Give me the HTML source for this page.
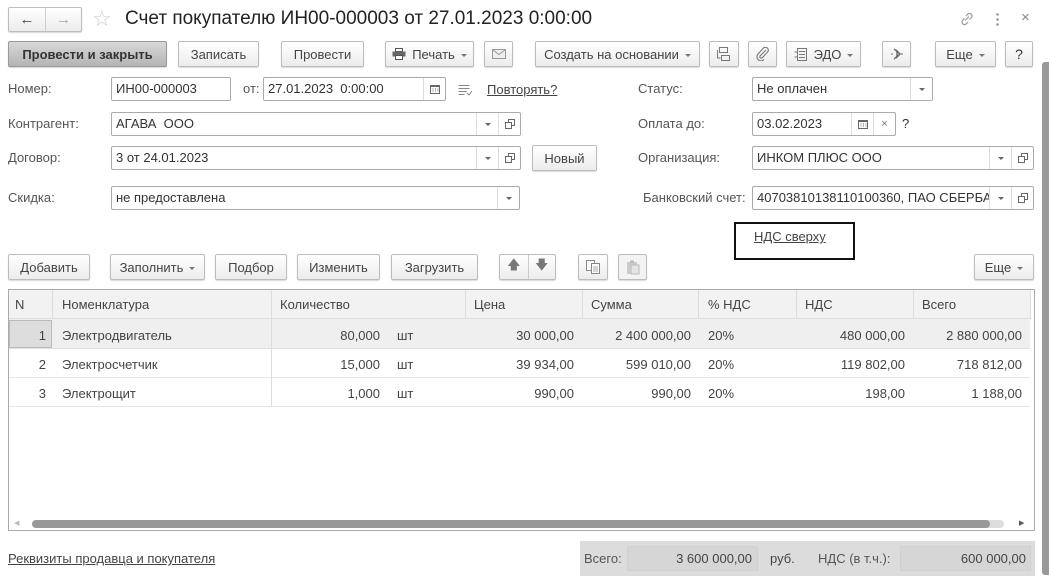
<!DOCTYPE html>
<html><head><meta charset="utf-8">
<style>
*{box-sizing:border-box;margin:0;padding:0}
body{width:1049px;height:582px;background:#fff;font-family:"Liberation Sans",sans-serif;font-size:12.5px;color:#333;position:relative;overflow:hidden}
.a{position:absolute;white-space:nowrap}
.btn{position:absolute;height:26px;border:1px solid #bcbcbc;border-radius:2px;background:linear-gradient(#fff,#ececec);box-shadow:0 1px 1px rgba(0,0,0,.15);display:flex;align-items:center;justify-content:center;color:#444;font-size:13px}
.inp{position:absolute;height:24px;border:1px solid #aaa;border-radius:2px;background:#fff;padding-left:4px;line-height:22px;color:#333;font-size:13px}
.lbl{position:absolute;color:#555;font-size:13px;line-height:24px}
.sb{position:absolute;top:0;bottom:0;border-left:1px solid #ddd;display:flex;align-items:center;justify-content:center;color:#777;font-size:8px}
.dd::after{content:"";border-left:3px solid transparent;border-right:3px solid transparent;border-top:3px solid #666}
.arr::after{content:"";display:inline-block;margin-left:6px;border-left:3px solid transparent;border-right:3px solid transparent;border-top:3px solid #777;vertical-align:middle}
.lnk{position:absolute;color:#444;text-decoration:underline;font-size:13px}
.th,.td{position:absolute;font-size:13px;color:#444}
.vl{position:absolute;width:1px;background:#ddd}
</style></head><body>

<!-- title bar -->
<div class="btn" style="left:8px;top:7px;width:74px;height:25px;justify-content:flex-start">
 <span style="width:37px;text-align:center;font-size:15px;color:#444">&#8592;</span>
 <span style="width:1px;height:23px;background:#ccc"></span>
 <span style="width:36px;text-align:center;font-size:15px;color:#aaa">&#8594;</span>
</div>
<div class="a" style="left:92px;top:6px;font-size:22px;color:#ccc">&#9734;</div>
<div class="a" style="left:125px;top:8px;font-size:19px;color:#222">Счет покупателю ИН00-000003 от 27.01.2023 0:00:00</div>
<svg class="a" style="left:958px;top:11px" width="18" height="16" viewBox="0 0 18 16"><g fill="none" stroke="#999" stroke-width="1.2"><path d="M8 5l2-2a2.5 2.5 0 0 1 3.5 3.5l-2 2"/><path d="M10 11l-2 2a2.5 2.5 0 0 1-3.5-3.5l2-2"/><path d="M7 9.5l4-4"/></g></svg>
<div class="a" style="left:996px;top:12px;width:3px;height:14px;background:radial-gradient(circle,#888 1.2px,transparent 1.3px) 0 0/3px 5px"></div>
<div class="a" style="left:1021px;top:9px;font-size:15px;color:#888">×</div>

<!-- toolbar -->
<div class="btn" style="left:8px;top:41px;width:159px;background:linear-gradient(#d8d8d8,#b4b4b4);border-color:#999;font-weight:bold;color:#333">Провести и закрыть</div>
<div class="btn" style="left:178px;top:41px;width:81px">Записать</div>
<div class="btn" style="left:281px;top:41px;width:83px">Провести</div>
<div class="btn" style="left:385px;top:41px;width:89px"><svg width="14" height="12" viewBox="0 0 14 12" style="margin-right:6px"><rect x="3.5" y="0.5" width="7" height="3" fill="none" stroke="#555"/><rect x="0.5" y="3.5" width="13" height="5" fill="#666"/><rect x="3.5" y="7.5" width="7" height="4" fill="#fff" stroke="#555"/></svg><span class="arr">Печать</span></div>
<div class="btn" style="left:484px;top:41px;width:29px"><svg width="14" height="10"><rect x="0.5" y="0.5" width="13" height="9" fill="#eee" stroke="#999"/><path d="M.5 .5l6.5 5 6.5-5" fill="none" stroke="#999"/></svg></div>
<div class="btn" style="left:535px;top:41px;width:165px"><span class="arr">Создать на основании</span></div>
<div class="btn" style="left:709px;top:41px;width:30px"><svg width="14" height="14"><g fill="none" stroke="#777"><rect x="2.5" y="0.5" width="8" height="5"/><rect x="4.5" y="8.5" width="8" height="5"/><path d="M.5 3v8h3"/></g></svg></div>
<div class="btn" style="left:748px;top:41px;width:29px"><svg width="14" height="14"><path d="M10 3l-6 6a1.5 1.5 0 0 0 2 2l6-6.5a3 3 0 0 0-4-4L2 7a4 4 0 0 0 6 5.5" fill="none" stroke="#777" stroke-width="1.1"/></svg></div>
<div class="btn" style="left:786px;top:41px;width:75px"><svg width="14" height="13" style="margin-right:6px"><g fill="none" stroke="#777"><rect x="3.5" y="0.5" width="9" height="12"/><path d="M5 3.5h6M5 6.5h6M5 9.5h6M.5 4h3M.5 9h3"/></g></svg><span class="arr">ЭДО</span></div>
<div class="btn" style="left:882px;top:41px;width:29px"><svg width="14" height="14"><path d="M4 2l6 5-3 3V4l3 3-6 5" fill="none" stroke="#666" stroke-width="1.4"/><path d="M1 7h2M11 7h2" stroke="#666"/></svg></div>
<div class="btn" style="left:935px;top:41px;width:61px"><span class="arr">Еще</span></div>
<div class="btn" style="left:1005px;top:41px;width:28px;font-size:14px;color:#333">?</div>

<!-- vertical scrollbar -->
<div class="a" style="left:1042px;top:62px;width:7px;height:513px;background:#999;border-radius:3px 0 0 3px"></div>

<!-- row 1 -->
<div class="lbl" style="left:8px;top:77px">Номер:</div>
<div class="inp" style="left:111px;top:77px;width:120px">ИН00-000003</div>
<div class="lbl" style="left:243px;top:77px">от:</div>
<div class="inp" style="left:263px;top:77px;width:183px">27.01.2023&nbsp; 0:00:00<div class="sb" style="right:0;width:22px"><svg width="10" height="10"><rect x=".5" y="1.5" width="9" height="8" fill="none" stroke="#666"/><rect x="0" y="1" width="10" height="2" fill="#666"/><path d="M2.5 5h1M5 5h1M7.5 5h1M2.5 7h1M5 7h1M7.5 7h1" stroke="#666"/></svg></div></div>
<svg class="a" style="left:458px;top:84px" width="14" height="12"><g stroke="#888"><path d="M.5 1.5h11M.5 4.5h11M.5 7.5h8M.5 10.5h6"/><path d="M9 9l2 2 3-4" fill="none"/></g></svg>
<div class="lnk" style="left:487px;top:82px">Повторять?</div>
<div class="lbl" style="left:638px;top:77px">Статус:</div>
<div class="inp" style="left:752px;top:77px;width:181px">Не оплачен<div class="sb dd" style="right:0;width:22px"></div></div>

<!-- row 2 -->
<div class="lbl" style="left:8px;top:112px">Контрагент:</div>
<div class="inp" style="left:111px;top:112px;width:410px">АГАВА&nbsp; ООО<div class="sb dd" style="right:22px;width:22px"></div><div class="sb" style="right:0;width:22px"><svg width="10" height="10"><rect x="3.5" y=".5" width="6" height="6" fill="none" stroke="#666"/><rect x=".5" y="3.5" width="6" height="6" fill="#fff" stroke="#666"/></svg></div></div>
<div class="lbl" style="left:638px;top:112px">Оплата до:</div>
<div class="inp" style="left:752px;top:112px;width:144px">03.02.2023<div class="sb" style="right:22px;width:22px"><svg width="10" height="10"><rect x=".5" y="1.5" width="9" height="8" fill="none" stroke="#666"/><rect x="0" y="1" width="10" height="2" fill="#666"/><path d="M2.5 5h1M5 5h1M7.5 5h1M2.5 7h1M5 7h1M7.5 7h1" stroke="#666"/></svg></div><div class="sb" style="right:0;width:22px;font-size:11px">×</div></div>
<div class="lbl" style="left:902px;top:112px;color:#333">?</div>

<!-- row 3 -->
<div class="lbl" style="left:8px;top:146px">Договор:</div>
<div class="inp" style="left:111px;top:146px;width:410px">3 от 24.01.2023<div class="sb dd" style="right:22px;width:22px"></div><div class="sb" style="right:0;width:22px"><svg width="10" height="10"><rect x="3.5" y=".5" width="6" height="6" fill="none" stroke="#666"/><rect x=".5" y="3.5" width="6" height="6" fill="#fff" stroke="#666"/></svg></div></div>
<div class="btn" style="left:532px;top:145px;width:65px">Новый</div>
<div class="lbl" style="left:638px;top:146px">Организация:</div>
<div class="inp" style="left:752px;top:146px;width:282px">ИНКОМ ПЛЮС ООО<div class="sb dd" style="right:22px;width:22px"></div><div class="sb" style="right:0;width:22px"><svg width="10" height="10"><rect x="3.5" y=".5" width="6" height="6" fill="none" stroke="#666"/><rect x=".5" y="3.5" width="6" height="6" fill="#fff" stroke="#666"/></svg></div></div>

<!-- row 4 -->
<div class="lbl" style="left:8px;top:186px">Скидка:</div>
<div class="inp" style="left:111px;top:186px;width:409px">не предоставлена<div class="sb dd" style="right:0;width:22px"></div></div>
<div class="lbl" style="left:643px;top:186px">Банковский счет:</div>
<div class="inp" style="left:752px;top:186px;width:282px;overflow:hidden">40703810138110100360, ПАО СБЕРБА<div class="sb dd" style="right:22px;width:22px;background:#fff"></div><div class="sb" style="right:0;width:22px;background:#fff"><svg width="10" height="10"><rect x="3.5" y=".5" width="6" height="6" fill="none" stroke="#666"/><rect x=".5" y="3.5" width="6" height="6" fill="#fff" stroke="#666"/></svg></div></div>

<div class="a" style="left:734px;top:222px;width:121px;height:38px;border:2px solid #111"></div>
<div class="lnk" style="left:754px;top:229px">НДС сверху</div>

<!-- table toolbar -->
<div class="btn" style="left:8px;top:254px;width:82px">Добавить</div>
<div class="btn" style="left:110px;top:254px;width:95px"><span class="arr">Заполнить</span></div>
<div class="btn" style="left:215px;top:254px;width:72px">Подбор</div>
<div class="btn" style="left:297px;top:254px;width:83px">Изменить</div>
<div class="btn" style="left:391px;top:254px;width:87px">Загрузить</div>
<div class="btn" style="left:499px;top:254px;width:57px;justify-content:flex-start"><span style="width:28px;text-align:center;color:#777;font-size:13px">&#129093;</span><span style="width:1px;height:24px;background:#ccc"></span><span style="width:27px;text-align:center;color:#777;font-size:13px">&#129095;</span></div>
<div class="btn" style="left:578px;top:254px;width:30px"><svg width="14" height="14"><rect x=".5" y=".5" width="8" height="10" fill="#fff" stroke="#888"/><rect x="5.5" y="3.5" width="8" height="10" fill="#fff" stroke="#888"/><path d="M7 7h5M7 9h5M7 11h5" stroke="#aaa"/></svg></div>
<div class="btn" style="left:618px;top:254px;width:29px;background:#f3f3f3"><svg width="14" height="15"><rect x="1" y="2" width="10" height="12" fill="#ccc"/><rect x="5" y="5" width="8" height="9" fill="#e4e4e4" stroke="#bbb"/><rect x="4" y="0.5" width="4" height="3" fill="#bbb"/></svg></div>
<div class="btn" style="left:974px;top:254px;width:60px"><span class="arr">Еще</span></div>

<!-- table -->
<div class="a" style="left:8px;top:289px;width:1027px;height:242px;border:1px solid #aaa;background:#fff"></div>
<div class="a" style="left:9px;top:290px;width:1021px;height:29px;background:#f2f2f2;border-bottom:1px solid #ddd"></div>
<div class="a" style="left:9px;top:319px;width:1021px;height:30px;background:#efefef;border-bottom:1px solid #e0e0e0"></div>
<div class="a" style="left:9px;top:320px;width:43px;height:28px;background:#ddd;border:1px solid #bbb"></div>
<div class="a" style="left:9px;top:349px;width:1021px;height:29px;border-bottom:1px solid #e6e6e6"></div>
<div class="a" style="left:9px;top:378px;width:1021px;height:29px;border-bottom:1px solid #e6e6e6"></div>
<div class="vl" style="left:52px;top:290px;height:29px"></div>
<div class="vl" style="left:271px;top:290px;height:117px"></div>
<div class="vl" style="left:465px;top:290px;height:29px"></div>
<div class="vl" style="left:582px;top:290px;height:29px"></div>
<div class="vl" style="left:698px;top:290px;height:29px"></div>
<div class="vl" style="left:796px;top:290px;height:29px"></div>
<div class="vl" style="left:913px;top:290px;height:29px"></div>
<div class="vl" style="left:1030px;top:290px;height:29px"></div>

<div class="th" style="left:15px;top:297px">N</div>
<div class="th" style="left:62px;top:297px">Номенклатура</div>
<div class="th" style="left:280px;top:297px">Количество</div>
<div class="th" style="left:474px;top:297px">Цена</div>
<div class="th" style="left:591px;top:297px">Сумма</div>
<div class="th" style="left:708px;top:297px">% НДС</div>
<div class="th" style="left:805px;top:297px">НДС</div>
<div class="th" style="left:922px;top:297px">Всего</div>

<div class="td" style="right:1003px;top:328px">1</div>
<div class="td" style="left:62px;top:328px">Электродвигатель</div>
<div class="td" style="right:669px;top:328px">80,000</div>
<div class="td" style="left:397px;top:328px">шт</div>
<div class="td" style="right:475px;top:328px">30 000,00</div>
<div class="td" style="right:358px;top:328px">2 400 000,00</div>
<div class="td" style="left:708px;top:328px">20%</div>
<div class="td" style="right:144px;top:328px">480 000,00</div>
<div class="td" style="right:27px;top:328px">2 880 000,00</div>

<div class="td" style="right:1003px;top:357px">2</div>
<div class="td" style="left:62px;top:357px">Электросчетчик</div>
<div class="td" style="right:669px;top:357px">15,000</div>
<div class="td" style="left:397px;top:357px">шт</div>
<div class="td" style="right:475px;top:357px">39 934,00</div>
<div class="td" style="right:358px;top:357px">599 010,00</div>
<div class="td" style="left:708px;top:357px">20%</div>
<div class="td" style="right:144px;top:357px">119 802,00</div>
<div class="td" style="right:27px;top:357px">718 812,00</div>

<div class="td" style="right:1003px;top:386px">3</div>
<div class="td" style="left:62px;top:386px">Электрощит</div>
<div class="td" style="right:669px;top:386px">1,000</div>
<div class="td" style="left:397px;top:386px">шт</div>
<div class="td" style="right:475px;top:386px">990,00</div>
<div class="td" style="right:358px;top:386px">990,00</div>
<div class="td" style="left:708px;top:386px">20%</div>
<div class="td" style="right:144px;top:386px">198,00</div>
<div class="td" style="right:27px;top:386px">1 188,00</div>

<!-- h scrollbar -->
<div class="a" style="left:14px;top:519px;font-size:7px;color:#bbb">&#9664;</div>
<div class="a" style="left:32px;top:520px;width:972px;height:8px;background:#ddd;border-radius:4px"></div>
<div class="a" style="left:32px;top:520px;width:958px;height:8px;background:#999;border-radius:4px"></div>
<div class="a" style="left:1019px;top:519px;font-size:7px;color:#555">&#9654;</div>

<!-- footer -->
<div class="lnk" style="left:8px;top:551px">Реквизиты продавца и покупателя</div>
<div class="a" style="left:580px;top:541px;width:455px;height:35px;background:#dcdcdc"></div>
<div class="a" style="left:627px;top:546px;width:131px;height:25px;background:#d6d6d6;border:1px solid #d0d0d0"></div>
<div class="a" style="left:900px;top:546px;width:131px;height:25px;background:#d6d6d6;border:1px solid #d0d0d0"></div>
<div class="td" style="left:584px;top:551px;color:#555">Всего:</div>
<div class="td" style="right:297px;top:551px">3 600 000,00</div>
<div class="td" style="left:770px;top:551px">руб.</div>
<div class="td" style="left:818px;top:551px;color:#555">НДС (в т.ч.):</div>
<div class="td" style="right:23px;top:551px">600 000,00</div>
</body></html>
